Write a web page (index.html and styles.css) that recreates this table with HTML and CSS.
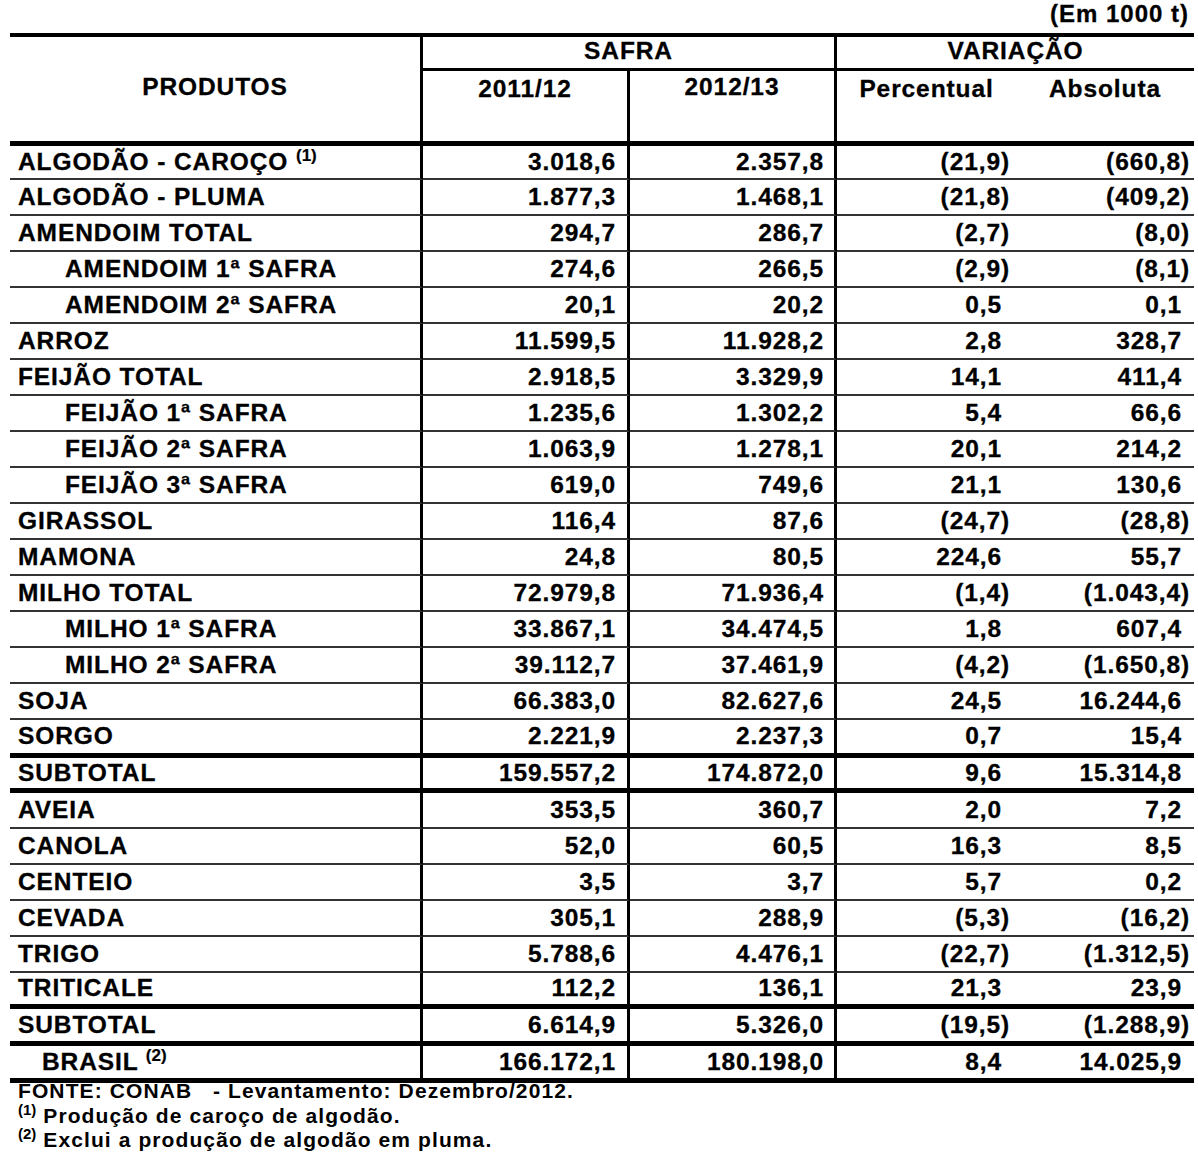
FILE: index.html
```
<!DOCTYPE html>
<html lang="pt-BR">
<head>
<meta charset="utf-8">
<title>Produção de grãos — Safra 2011/12 e 2012/13</title>
<link rel="stylesheet" href="styles.css">
</head>
<body>
<div class="page">
  <div class="unit">(Em 1000 t)</div>
  <table class="grid">
    <colgroup>
      <col class="c-prod">
      <col class="c-safra">
      <col class="c-safra2">
      <col class="c-perc">
      <col class="c-abs">
    </colgroup>
    <thead>
      <tr class="h1">
        <th class="produtos vr" rowspan="2">PRODUTOS</th>
        <th class="group vr" colspan="2">SAFRA</th>
        <th class="group" colspan="2">VARIAÇÃO</th>
      </tr>
      <tr class="h2">
        <th class="sub vr">2011/12</th>
        <th class="sub sub-high vr">2012/13</th>
        <th class="sub">Percentual</th>
        <th class="sub">Absoluta</th>
      </tr>
    </thead>
    <tbody>
      <tr class="first"><td class="name">ALGODÃO - CAROÇO <sup class="note">(1)</sup></td><td>3.018,6</td><td>2.357,8</td><td class="perc">(21,9)</td><td class="abs">(660,8)</td></tr>
      <tr><td class="name">ALGODÃO - PLUMA</td><td>1.877,3</td><td>1.468,1</td><td class="perc">(21,8)</td><td class="abs">(409,2)</td></tr>
      <tr><td class="name">AMENDOIM TOTAL</td><td>294,7</td><td>286,7</td><td class="perc">(2,7)</td><td class="abs">(8,0)</td></tr>
      <tr><td class="name sub-item">AMENDOIM 1ª SAFRA</td><td>274,6</td><td>266,5</td><td class="perc">(2,9)</td><td class="abs">(8,1)</td></tr>
      <tr><td class="name sub-item">AMENDOIM 2ª SAFRA</td><td>20,1</td><td>20,2</td><td class="perc pos">0,5</td><td class="abs pos">0,1</td></tr>
      <tr><td class="name">ARROZ</td><td>11.599,5</td><td>11.928,2</td><td class="perc pos">2,8</td><td class="abs pos">328,7</td></tr>
      <tr><td class="name">FEIJÃO TOTAL</td><td>2.918,5</td><td>3.329,9</td><td class="perc pos">14,1</td><td class="abs pos">411,4</td></tr>
      <tr><td class="name sub-item">FEIJÃO 1ª SAFRA</td><td>1.235,6</td><td>1.302,2</td><td class="perc pos">5,4</td><td class="abs pos">66,6</td></tr>
      <tr><td class="name sub-item">FEIJÃO 2ª SAFRA</td><td>1.063,9</td><td>1.278,1</td><td class="perc pos">20,1</td><td class="abs pos">214,2</td></tr>
      <tr><td class="name sub-item">FEIJÃO 3ª SAFRA</td><td>619,0</td><td>749,6</td><td class="perc pos">21,1</td><td class="abs pos">130,6</td></tr>
      <tr><td class="name">GIRASSOL</td><td>116,4</td><td>87,6</td><td class="perc">(24,7)</td><td class="abs">(28,8)</td></tr>
      <tr><td class="name">MAMONA</td><td>24,8</td><td>80,5</td><td class="perc pos">224,6</td><td class="abs pos">55,7</td></tr>
      <tr><td class="name">MILHO TOTAL</td><td>72.979,8</td><td>71.936,4</td><td class="perc">(1,4)</td><td class="abs">(1.043,4)</td></tr>
      <tr><td class="name sub-item">MILHO 1ª SAFRA</td><td>33.867,1</td><td>34.474,5</td><td class="perc pos">1,8</td><td class="abs pos">607,4</td></tr>
      <tr><td class="name sub-item">MILHO 2ª SAFRA</td><td>39.112,7</td><td>37.461,9</td><td class="perc">(4,2)</td><td class="abs">(1.650,8)</td></tr>
      <tr><td class="name">SOJA</td><td>66.383,0</td><td>82.627,6</td><td class="perc pos">24,5</td><td class="abs pos">16.244,6</td></tr>
      <tr class="before-total"><td class="name">SORGO</td><td>2.221,9</td><td>2.237,3</td><td class="perc pos">0,7</td><td class="abs pos">15,4</td></tr>
      <tr class="total"><td class="name">SUBTOTAL</td><td>159.557,2</td><td>174.872,0</td><td class="perc pos">9,6</td><td class="abs pos">15.314,8</td></tr>
      <tr><td class="name">AVEIA</td><td>353,5</td><td>360,7</td><td class="perc pos">2,0</td><td class="abs pos">7,2</td></tr>
      <tr><td class="name">CANOLA</td><td>52,0</td><td>60,5</td><td class="perc pos">16,3</td><td class="abs pos">8,5</td></tr>
      <tr><td class="name">CENTEIO</td><td>3,5</td><td>3,7</td><td class="perc pos">5,7</td><td class="abs pos">0,2</td></tr>
      <tr><td class="name">CEVADA</td><td>305,1</td><td>288,9</td><td class="perc">(5,3)</td><td class="abs">(16,2)</td></tr>
      <tr><td class="name">TRIGO</td><td>5.788,6</td><td>4.476,1</td><td class="perc">(22,7)</td><td class="abs">(1.312,5)</td></tr>
      <tr class="heavy triticale"><td class="name">TRITICALE</td><td>112,2</td><td>136,1</td><td class="perc pos">21,3</td><td class="abs pos">23,9</td></tr>
      <tr class="heavy"><td class="name">SUBTOTAL</td><td>6.614,9</td><td>5.326,0</td><td class="perc">(19,5)</td><td class="abs">(1.288,9)</td></tr>
      <tr class="heavy"><td class="name country">BRASIL <sup class="note">(2)</sup></td><td>166.172,1</td><td>180.198,0</td><td class="perc pos">8,4</td><td class="abs pos">14.025,9</td></tr>
    </tbody>
  </table>
  <div class="footer">
    <p>FONTE: CONAB&nbsp;&nbsp; - Levantamento: Dezembro/2012.</p>
    <p><sup class="fnote">(1)</sup> Produção de caroço de algodão.</p>
    <p><sup class="fnote">(2)</sup> Exclui a produção de algodão em pluma.</p>
  </div>
</div>
</body>
</html>
```
FILE: styles.css
```
html, body {
  margin: 0;
  padding: 0;
  background: #fff;
}

body {
  font-family: "Liberation Sans", Arial, sans-serif;
  color: #000;
}

.page {
  width: 1184px;
  padding-left: 10px;
}

.unit {
  height: 33px;
  line-height: 28px;
  text-align: right;
  padding-right: 5px;
  font-size: 24px;
  font-weight: bold;
  letter-spacing: 1px;
  box-sizing: border-box;
  -webkit-text-stroke: 0.3px #000;
}

.grid {
  width: 1184px;
  table-layout: fixed;
  border-collapse: separate;
  border-spacing: 0;
  border-top: 4px solid #000;
  font-size: 24.5px;
  font-weight: bold;
  letter-spacing: 0.9px;
  -webkit-text-stroke: 0.3px #000;
}

.c-prod { width: 413px; }
.c-safra { width: 207px; }
.c-safra2 { width: 207px; }
.c-perc { width: 179px; }
.c-abs { width: 178px; }

.grid th,
.grid td {
  padding: 0;
  box-sizing: border-box;
  white-space: nowrap;
  line-height: 27px;
}

.grid th {
  font-weight: bold;
  text-align: center;
}

.grid .vr {
  border-right: 3px solid #000;
}

.h1 { height: 33px; }
.h2 { height: 75px; }

.grid th.group {
  border-bottom: 3px solid #000;
  vertical-align: middle;
  padding-bottom: 4px;
}

.grid th.produtos {
  border-bottom: 5px solid #000;
  vertical-align: middle;
  padding-bottom: 6px;
}

.grid th.sub {
  border-bottom: 5px solid #000;
  vertical-align: top;
  padding-top: 4px;
}

.grid th.sub-high {
  padding-top: 2px;
}

.grid tbody tr { height: 36px; }
.grid tbody tr.first { height: 34px; }
.grid tbody tr.before-total { height: 38px; }
.grid tbody tr.total { height: 35px; }
.grid tbody tr.heavy { height: 37px; }
.grid tbody tr.triticale { height: 36px; }

.grid td {
  border-bottom: 2px solid #333;
  text-align: right;
  vertical-align: middle;
  padding-bottom: 2px;
}

.grid tr.before-total td,
.grid tr.total td,
.grid tr.heavy td {
  border-bottom: 5px solid #000;
}

.grid td:nth-child(1),
.grid td:nth-child(2),
.grid td:nth-child(3) {
  border-right: 3px solid #000;
}

.grid td:nth-child(2) { padding-right: 11px; }
.grid td:nth-child(3) { padding-right: 10px; }

.grid td.perc { padding-right: 6px; }
.grid td.abs { padding-right: 4px; }
.grid td.perc.pos { padding-right: 14px; }
.grid td.abs.pos { padding-right: 12px; }

.grid td.name {
  text-align: left;
  padding-left: 8px;
}

.grid td.sub-item { padding-left: 55px; }
.grid td.country { padding-left: 32px; }

.note {
  font-size: 17px;
  letter-spacing: 0;
  line-height: 0;
  vertical-align: 9px;
  -webkit-text-stroke: 0.2px #000;
}

.footer {
  margin-top: -4px;
  padding-left: 8px;
  font-size: 21px;
  font-weight: bold;
  letter-spacing: 1.1px;
  line-height: 24.5px;
}

.footer p {
  margin: 0;
}

.fnote {
  font-size: 15px;
  font-weight: bold;
  letter-spacing: 0;
  line-height: 0;
  vertical-align: 8px;
}
```
